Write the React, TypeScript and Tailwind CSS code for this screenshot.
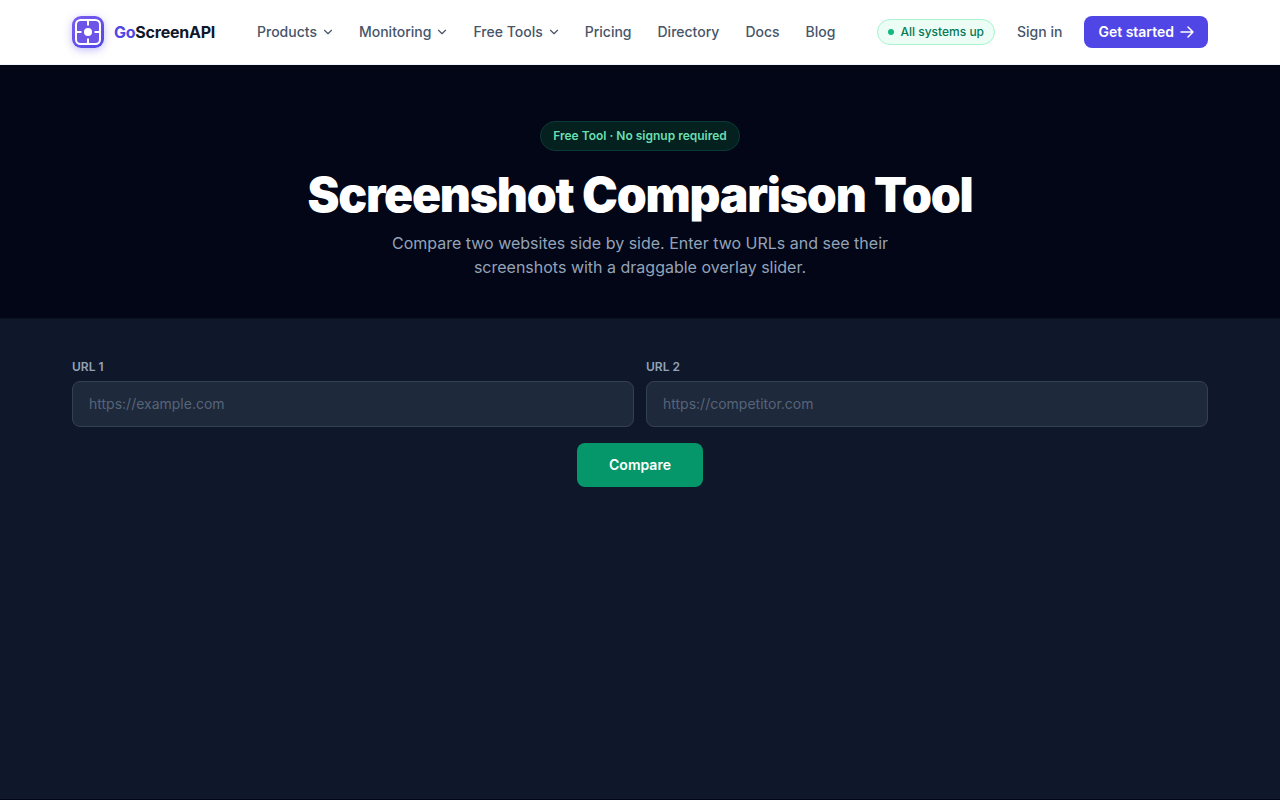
import { ChevronDown } from 'lucide-react';

const Logo = () => (
  <div className="w-8 h-8 rounded-[9px] bg-gradient-to-br from-[#7c5cf0] to-[#4f46e5] shadow-[0_2px_8px_rgba(79,70,229,0.35)] flex items-center justify-center">
    <svg width="32" height="32" viewBox="0 0 32 32" fill="none">
      <rect x="4" y="4" width="24" height="24" rx="4.5" fill="#6d53e8" stroke="#fff" strokeWidth="2" />
      <path d="M16 4v5.5M16 22.5V28M4 16h5.5M22.5 16H28" stroke="#fff" strokeWidth="2" />
      <circle cx="16" cy="16" r="4" fill="#fff" />
    </svg>
  </div>
);

const NavItem = ({ label, menu }: { label: string; menu?: boolean }) => (
  <a className="flex items-center gap-1 text-sm font-medium text-[#475569]">
    {label}
    {menu && <ChevronDown size={14} strokeWidth={2} className="-mr-0.5" />}
  </a>
);

const UrlField = ({ label, placeholder }: { label: string; placeholder: string }) => (
  <div className="flex-1">
    <label className="block mb-1.5 text-xs font-semibold text-[#94a3b8]">{label}</label>
    <input
      placeholder={placeholder}
      className="w-full h-[46px] px-4 pb-0.5 text-sm text-white bg-[#1e293b] border border-[#334155] rounded-lg outline-none placeholder:text-[#566479]"
    />
  </div>
);

const App = () => {
  return (
    <div className="h-screen flex flex-col overflow-hidden bg-[#0f172a] font-['Inter',sans-serif]">
      <header className="h-[65px] shrink-0 bg-white border-b border-[#f1f5f9]">
        <div className="h-16 mx-[72px] flex items-center">
          <div className="flex items-center gap-2.5">
            <Logo />
            <span className="text-base font-bold tracking-[-0.015em] text-[#0f172a]">
              <span className="text-[#4f46e5]">Go</span>ScreenAPI
            </span>
          </div>
          <nav className="ml-[42px] flex items-center gap-[26px]">
            <NavItem label="Products" menu />
            <NavItem label="Monitoring" menu />
            <NavItem label="Free Tools" menu />
            <NavItem label="Pricing" />
            <NavItem label="Directory" />
            <NavItem label="Docs" />
            <NavItem label="Blog" />
          </nav>
          <div className="ml-auto flex items-center">
            <div className="h-[26px] px-2.5 flex items-center gap-1.5 rounded-full bg-[#ecfdf5] border border-[#a7f3d0] text-xs font-medium text-[#047857]">
              <span className="w-1.5 h-1.5 rounded-full bg-[#10b981]" />
              All systems up
            </div>
            <a className="ml-[22px] text-sm font-medium text-[#475569]">Sign in</a>
            <a className="ml-[22px] h-8 px-3.5 flex items-center gap-1.5 rounded-lg bg-[#4f46e5] text-sm font-semibold text-white">
              Get started
              <svg width="14" height="14" viewBox="0 0 14 14" fill="none" stroke="currentColor" strokeWidth="1.5" strokeLinecap="round" strokeLinejoin="round">
                <path d="M1 7h12M8 2l5 5-5 5" />
              </svg>
            </a>
          </div>
        </div>
      </header>

      <section className="h-[254px] shrink-0 bg-[#020617] flex flex-col items-center pt-14 border-b border-[#0b1221]">
        <div className="h-[30px] px-3 flex items-center rounded-full bg-[#04201f] border border-[#0b3a36] text-xs font-semibold text-[#6adfb0]">
          Free Tool · No signup required
        </div>
        <h1 className="mt-5 text-5xl leading-[48px] font-black tracking-tight text-white">
          Screenshot Comparison Tool
        </h1>
        <p className="mt-3 w-[560px] text-center text-base leading-6 text-[#94a3b8]">
          Compare two websites side by side. Enter two URLs and see their screenshots with a draggable overlay slider.
        </p>
      </section>

      <main className="flex-1 px-[72px] pt-10">
        <div className="flex gap-3">
          <UrlField label="URL 1" placeholder="https://example.com" />
          <UrlField label="URL 2" placeholder="https://competitor.com" />
        </div>
        <div className="mt-4 flex justify-center">
          <button className="w-[126px] h-11 rounded-lg bg-[#059669] text-sm font-semibold text-white">Compare</button>
        </div>
      </main>

      <footer className="h-px shrink-0 bg-[#020617]" />
    </div>
  );
};

export default App;
